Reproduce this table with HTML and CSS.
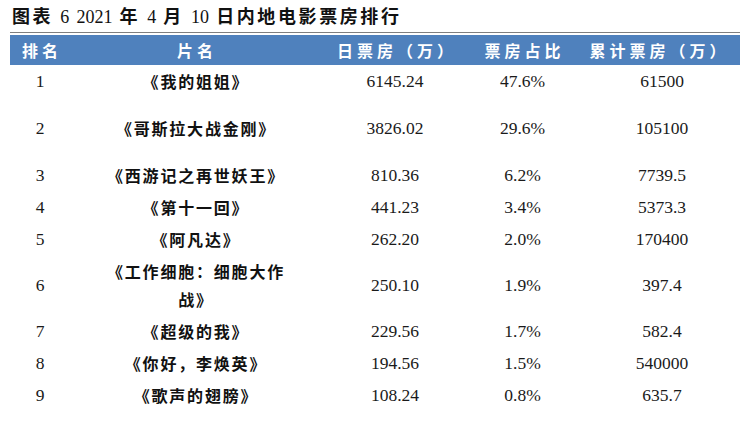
FILE: index.html
```html
<!DOCTYPE html>
<html lang="zh-CN">
<head>
<meta charset="utf-8">
<title>图表 6</title>
<link rel="stylesheet" href="styles.css">
</head>
<body>
<div class="page">
  <div class="title">图表 <span class="tnum">6</span> <span class="tnum">2021</span> 年 <span class="tnum">4</span> 月 <span class="tnum">10</span> 日内地电影票房排行</div>
  <div class="rule"></div>
  <div class="grid head">
    <div class="c">排名</div>
    <div class="c">片名</div>
    <div class="c">日票房（万）</div>
    <div class="c">票房占比</div>
    <div class="c last">累计票房（万）</div>
  </div>
  <div class="grid row spaced">
    <div class="n">1</div><div class="f">《我的姐姐》</div><div class="n">6145.24</div><div class="n">47.6%</div><div class="n last">61500</div>
  </div>
  <div class="grid row spaced">
    <div class="n">2</div><div class="f">《哥斯拉大战金刚》</div><div class="n">3826.02</div><div class="n">29.6%</div><div class="n last">105100</div>
  </div>
  <div class="grid row">
    <div class="n">3</div><div class="f">《西游记之再世妖王》</div><div class="n">810.36</div><div class="n">6.2%</div><div class="n last">7739.5</div>
  </div>
  <div class="grid row">
    <div class="n">4</div><div class="f">《第十一回》</div><div class="n">441.23</div><div class="n">3.4%</div><div class="n last">5373.3</div>
  </div>
  <div class="grid row">
    <div class="n">5</div><div class="f">《阿凡达》</div><div class="n">262.20</div><div class="n">2.0%</div><div class="n last">170400</div>
  </div>
  <div class="grid row double">
    <div class="n">6</div><div class="f wrap">《工作细胞：细胞大作<br>战》</div><div class="n">250.10</div><div class="n">1.9%</div><div class="n last">397.4</div>
  </div>
  <div class="grid row">
    <div class="n">7</div><div class="f">《超级的我》</div><div class="n">229.56</div><div class="n">1.7%</div><div class="n last">582.4</div>
  </div>
  <div class="grid row">
    <div class="n">8</div><div class="f">《你好，李焕英》</div><div class="n">194.56</div><div class="n">1.5%</div><div class="n last">540000</div>
  </div>
  <div class="grid row">
    <div class="n">9</div><div class="f">《歌声的翅膀》</div><div class="n">108.24</div><div class="n">0.8%</div><div class="n last">635.7</div>
  </div>
</div>
</body>
</html>
```

FILE: styles.css
```css
html, body {
  margin: 0;
  padding: 0;
  background: #ffffff;
}

.page {
  width: 730px;
  padding: 4px 0 0 10px;
  color: #111111;
}

.title {
  height: 26px;
  padding-left: 2px;
  font-family: "Liberation Serif", "Noto Sans CJK SC", serif;
  font-weight: 700;
  font-size: 18px;
  line-height: 26px;
  letter-spacing: 2.6px;
  white-space: nowrap;
  margin-bottom: 2px;
}

.tnum {
  font-weight: 400;
  font-size: 18px;
  letter-spacing: 0;
}

.rule {
  height: 1px;
  background: #7f7f7f;
  margin-bottom: 2px;
}

.grid {
  display: grid;
  grid-template-columns: 60px 250px 150px 105px 165px;
}

.head {
  height: 30px;
  align-items: center;
  background: #4f81bd;
  color: #ffffff;
  font-family: "Noto Sans CJK SC", sans-serif;
  font-weight: 700;
  font-size: 16px;
  letter-spacing: 4px;
}

.head .c {
  text-align: center;
  padding-left: 4px;
}

.row {
  height: 32px;
  align-items: center;
}

.row.spaced {
  height: 47px;
  align-items: start;
}

.row.double {
  height: 60px;
}

.n {
  text-align: center;
  font-family: "Liberation Serif", serif;
  font-size: 17.5px;
  line-height: 32px;
  color: #1a1a1a;
}

.last {
  padding-left: 9px;
}

.f {
  text-align: center;
  font-family: "Noto Sans CJK SC", sans-serif;
  font-weight: 700;
  font-size: 16px;
  line-height: 32px;
  letter-spacing: 1.8px;
  padding-left: 2px;
}

.f.wrap {
  line-height: 28px;
}
```
